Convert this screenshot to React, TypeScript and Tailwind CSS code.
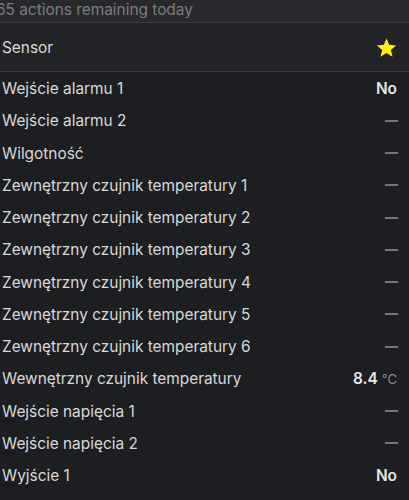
import React from "react";

type Row = { label: string; value?: string; unit?: string };

const rows: Row[] = [
  { label: "Wejście alarmu 1", value: "No" },
  { label: "Wejście alarmu 2" },
  { label: "Wilgotność" },
  { label: "Zewnętrzny czujnik temperatury 1" },
  { label: "Zewnętrzny czujnik temperatury 2" },
  { label: "Zewnętrzny czujnik temperatury 3" },
  { label: "Zewnętrzny czujnik temperatury 4" },
  { label: "Zewnętrzny czujnik temperatury 5" },
  { label: "Zewnętrzny czujnik temperatury 6" },
  { label: "Wewnętrzny czujnik temperatury", value: "8.4", unit: "°C" },
  { label: "Wejście napięcia 1" },
  { label: "Wejście napięcia 2" },
  { label: "Wyjście 1", value: "No" },
];

function Star() {
  return (
    <svg width="21" height="20" viewBox="0 0 24 23">
      <path
        d="M12 0.5l3.1 7.4 8 .6-6.1 5.2 1.9 7.8L12 17.3l-6.9 4.2 1.9-7.8L.9 8.5l8-.6z"
        fill="#ffec1a"
      />
    </svg>
  );
}

export default function App() {
  return (
    <div
      className="h-[500px] w-[409px] overflow-hidden bg-[#1d1e21] text-[15.4px] text-[#d9d9db]"
      style={{ fontFamily: "Inter, 'Noto Sans', sans-serif" }}
    >
      <div className="flex h-[23px] items-end border-b border-[#3a3a3d] bg-[#28292c] pb-[3px]">
        <span className="-ml-[4px] leading-[18px] text-[#7d7d82]">65 actions remaining today</span>
      </div>
      <div className="flex h-[49px] items-center justify-between border-b border-[#3a3a3d] bg-[#222326] pl-[2px] pr-[12px] pt-[1px]">
        <span>Sensor</span>
        <Star />
      </div>
      {rows.map((r) => (
        <div key={r.label} className="flex h-[32.25px] items-center justify-between pl-[2px] pr-[12px] pt-[1px]">
          <span>{r.label}</span>
          {r.value ? (
            <span className="font-semibold text-[#e6e6e8]">
              {r.value}
              {r.unit && <span className="ml-1 text-[13px] font-normal text-[#8a8a8f]">{r.unit}</span>}
            </span>
          ) : (
            <span className="mr-[-1px] block h-[2px] w-[13px] bg-[#77777b]" />
          )}
        </div>
      ))}
    </div>
  );
}
